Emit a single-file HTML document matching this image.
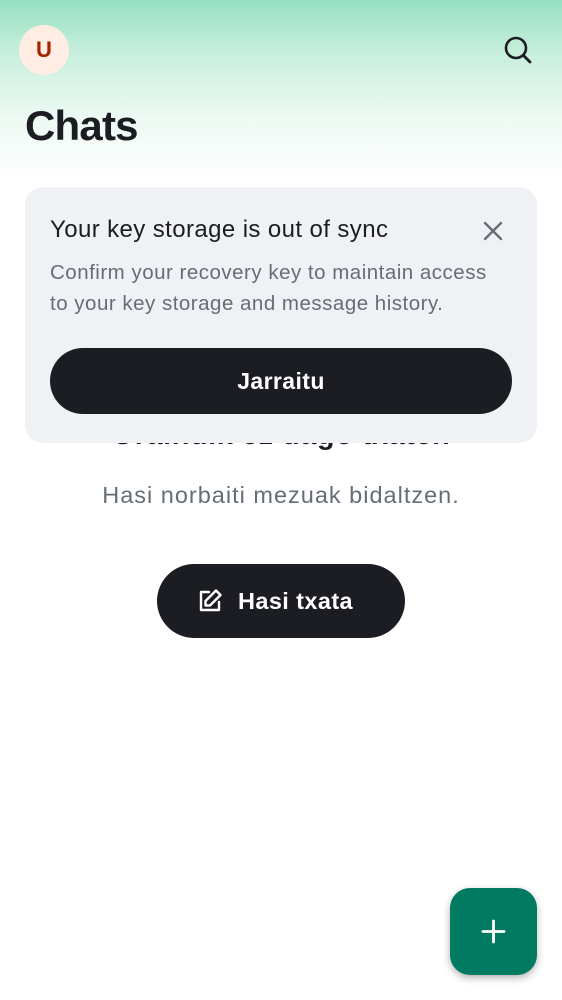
<!DOCTYPE html>
<html><head><meta charset="utf-8"><style>
body{margin:0;width:562px;height:1000px;position:relative;overflow:hidden;background:#fff;font-family:"Liberation Sans",sans-serif;color:#1b1d22}
.grad{position:absolute;left:0;top:0;width:562px;height:180px;background:linear-gradient(#96e0c2 0%,#c8efdd 30%,#edf9f3 65%,#fff 100%)}
.av{position:absolute;left:19px;top:25px;width:50px;height:50px;border-radius:50%;background:#ffece3;color:#a52300;font-weight:bold;font-size:22px;text-align:center;line-height:50px}
h1{position:absolute;left:25px;top:100px;margin:0;font-size:42px;font-weight:bold;letter-spacing:-0.8px;line-height:52px}
.hid{position:absolute;left:0;width:562px;top:419px;text-align:center;font-size:29px;font-weight:bold;letter-spacing:0.5px}
.card{position:absolute;left:25px;top:187px;width:512px;height:256px;background:#f0f1f5;border-radius:18px}
.t{position:absolute;left:25px;top:29px;font-size:24px;letter-spacing:0.4px}
.d{position:absolute;left:25px;top:70px;font-size:20.5px;line-height:31px;color:#656d77;letter-spacing:0.5px;white-space:nowrap}
.btn{position:absolute;left:25px;top:161px;width:462px;height:66px;border-radius:33px;background:#1b1d22;color:#fff;font-weight:bold;font-size:23px;text-align:center;line-height:66px;letter-spacing:0.4px}
.sub{position:absolute;left:0;width:562px;top:482px;text-align:center;font-size:23.5px;color:#656d77;letter-spacing:1px}
.b2{position:absolute;left:157px;top:564px;width:248px;height:74px;border-radius:37px;background:#1b1d22;color:#fff;font-weight:bold;font-size:23.5px;line-height:74px;letter-spacing:0.4px}
.fab{position:absolute;left:450px;top:888px;width:87px;height:87px;border-radius:20px;background:#007a61;box-shadow:0 3px 8px rgba(0,0,0,.3)}
</style></head><body>
<div class="grad"></div>
<div class="av">U</div>
<svg style="position:absolute;left:502px;top:34px" width="32" height="32" viewBox="0 0 32 32"><circle cx="14" cy="14" r="10" fill="none" stroke="#1b1d22" stroke-width="2.6"/><path d="M21.5 21.5l6.5 6.5" stroke="#1b1d22" stroke-width="2.8" stroke-linecap="round"/></svg>
<h1>Chats</h1>
<div class="hid">Oraindik ez dago txaten</div>
<div class="card">
<div class="t">Your key storage is out of sync</div>
<svg style="position:absolute;left:458px;top:34px" width="20" height="20" viewBox="0 0 20 20"><path d="M2 2l16 16M18 2L2 18" stroke="#656d77" stroke-width="2.4" stroke-linecap="round"/></svg>
<div class="d">Confirm your recovery key to maintain access<br>to your key storage and message history.</div>
<div class="btn">Jarraitu</div>
</div>
<div class="sub">Hasi norbaiti mezuak bidaltzen.</div>
<div class="b2"><svg style="position:absolute;left:40px;top:24px" width="26" height="26" viewBox="0 0 26 26"><path d="M12 4H4v18h18v-8" fill="none" stroke="#fff" stroke-width="2.4" stroke-linecap="round" stroke-linejoin="round"/><path d="M19 2.5l4.5 4.5L13 17.5H8.5V13z" fill="none" stroke="#fff" stroke-width="2.4" stroke-linejoin="round"/></svg><span style="position:absolute;left:81px">Hasi txata</span></div>
<div class="fab"><svg style="position:absolute;left:31px;top:31px" width="25" height="25" viewBox="0 0 25 25"><path d="M12.5 2v21M2 12.5h21" stroke="#fff" stroke-width="2.8" stroke-linecap="round"/></svg></div>
</body></html>
